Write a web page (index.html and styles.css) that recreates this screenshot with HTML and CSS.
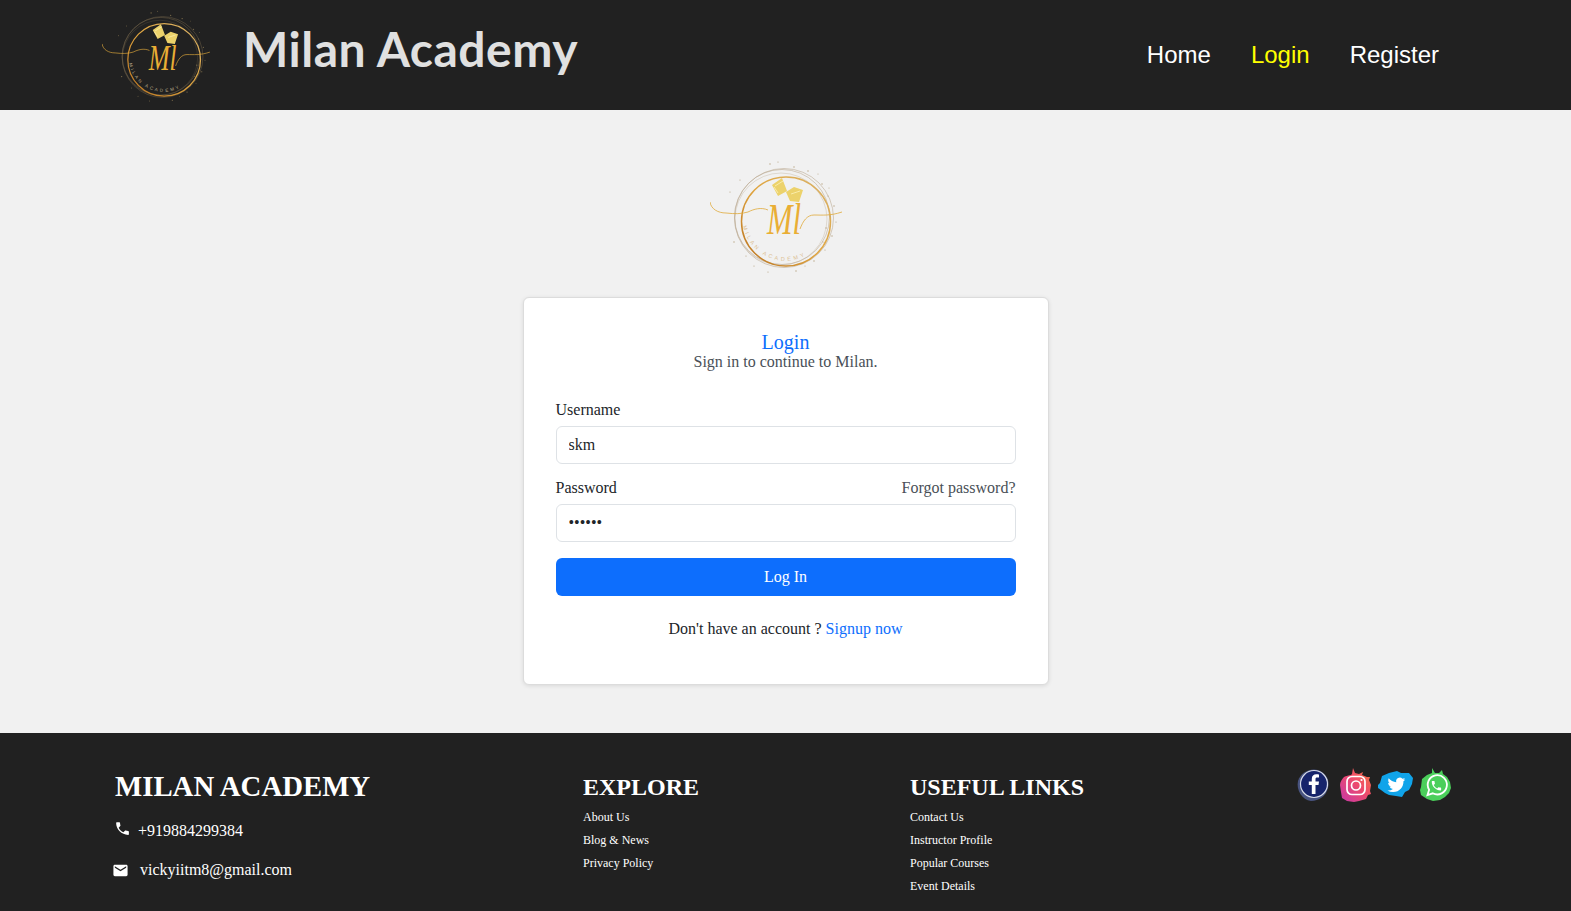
FILE: index.html
```html
<!DOCTYPE html>
<html lang="en">
<head>
<meta charset="utf-8">
<title>Milan Academy - Login</title>
<link rel="stylesheet" href="styles.css">
</head>
<body>
<svg class="defs" width="0" height="0" aria-hidden="true">
  <defs>
    <linearGradient id="gold-ring" x1="0" y1="1" x2="1" y2="0">
      <stop offset="0" stop-color="#b8711f"/>
      <stop offset=".5" stop-color="#e0a53f"/>
      <stop offset="1" stop-color="#d9b36a"/>
    </linearGradient>
    <symbol id="logo" viewBox="0 0 132 120">
      <circle class="ring-thin" cx="72" cy="59" r="47.5"/>
      <circle class="ring-thin" cx="74" cy="60" r="49.5"/>
      <circle class="ring-thin faint" cx="71" cy="61" r="46"/>
      <circle class="ring-gold" cx="76" cy="63.5" r="44.5"/>
      <path class="swash" d="M0 44c1 7 8 11 16 11 9 1 15 1 22-1 6-3 13-5 20-2M90 71c3-8 7-14 14-14 8 0 16 1 28-3"/>
      <path class="book" d="M62 27l10-7 5 13-9 5zM76 34l8-5 9 3-4 12-9-1z"/>
      <path class="book-edge" d="M65 28l8-5M68 35l-4-6M81 36l9-3"/>
      <text class="monogram" transform="translate(57 76) scale(.85 1.25)">Ml</text>
      <path id="logo-arc" class="arc" d="M33 68a43 43 0 0 0 77 17"/>
      <text class="logo-text"><textPath href="#logo-arc">MILAN ACADEMY</textPath></text>
      <g class="dots">
        <circle cx="60" cy="6" r=".7"/><circle cx="68" cy="4" r=".6"/><circle cx="84" cy="9" r=".7"/><circle cx="98" cy="13" r=".7"/>
        <circle cx="112" cy="26" r=".7"/><circle cx="118" cy="38" r=".6"/><circle cx="124" cy="48" r=".7"/><circle cx="126" cy="64" r=".6"/>
        <circle cx="122" cy="78" r=".7"/><circle cx="115" cy="92" r=".6"/><circle cx="104" cy="103" r=".7"/><circle cx="36" cy="98" r=".6"/>
        <circle cx="24" cy="84" r=".7"/><circle cx="44" cy="108" r=".6"/><circle cx="58" cy="114" r=".6"/><circle cx="86" cy="113" r=".7"/>
        <circle cx="30" cy="22" r=".6"/><circle cx="20" cy="34" r=".6"/><circle cx="120" cy="58" r=".7"/><circle cx="116" cy="70" r=".7"/>
        <circle cx="108" cy="16" r=".5"/><circle cx="119" cy="30" r=".5"/><circle cx="113" cy="84" r=".6"/><circle cx="95" cy="108" r=".5"/>
      </g>
    </symbol>
  </defs>
</svg>

<header class="site-header">
  <div class="brand">
    <svg class="brand-logo on-dark"><use href="#logo"/></svg>
    <span class="brand-name">Milan Academy</span>
  </div>
  <nav class="site-nav">
    <a href="#">Home</a>
    <a href="#" class="active">Login</a>
    <a href="#">Register</a>
  </nav>
</header>

<main class="login-page">
  <svg class="page-logo on-light"><use href="#logo"/></svg>
  <section class="card">
    <div class="card-head">
      <h1>Login</h1>
      <p>Sign in to continue to Milan.</p>
    </div>
    <form>
      <label class="field-label" for="username">Username</label>
      <input class="field-input" id="username" type="text" value="skm">
      <div class="label-row">
        <label class="field-label" for="password">Password</label>
        <a href="#" class="forgot">Forgot password?</a>
      </div>
      <input class="field-input" id="password" type="password" value="secret">
      <button type="button" class="submit">Log In</button>
    </form>
    <p class="signup">Don't have an account ? <a href="#">Signup now</a></p>
  </section>
</main>

<footer class="site-footer">
  <div class="foot-col contact">
    <h2>MILAN ACADEMY</h2>
    <p class="contact-phone">
      <svg viewBox="0 0 24 24"><path d="M6.62 10.79c1.44 2.83 3.76 5.14 6.59 6.59l2.2-2.2c.27-.27.67-.36 1.02-.24 1.12.37 2.33.57 3.57.57.55 0 1 .45 1 1V20c0 .55-.45 1-1 1-9.39 0-17-7.61-17-17 0-.55.45-1 1-1h3.5c.55 0 1 .45 1 1 0 1.25.2 2.45.57 3.57.11.35.03.74-.25 1.02l-2.2 2.2z"/></svg>
      <span>+919884299384</span>
    </p>
    <p class="contact-mail">
      <svg viewBox="0 0 24 24"><path d="M20 4H4c-1.1 0-1.99.9-1.99 2L2 18c0 1.1.9 2 2 2h16c1.1 0 2-.9 2-2V6c0-1.1-.9-2-2-2zm0 4l-8 5-8-5V6l8 5 8-5v2z"/></svg>
      <span>vickyiitm8@gmail.com</span>
    </p>
  </div>
  <div class="foot-col">
    <h3>EXPLORE</h3>
    <ul>
      <li><a href="#">About Us</a></li>
      <li><a href="#">Blog &amp; News</a></li>
      <li><a href="#">Privacy Policy</a></li>
    </ul>
  </div>
  <div class="foot-col">
    <h3>USEFUL LINKS</h3>
    <ul>
      <li><a href="#">Contact Us</a></li>
      <li><a href="#">Instructor Profile</a></li>
      <li><a href="#">Popular Courses</a></li>
      <li><a href="#">Event Details</a></li>
    </ul>
  </div>
  <div class="socials">
    <svg viewBox="0 0 36 36" class="social social-fb">
      <path class="fb-smear" d="M3 14c3-9 12-13 20-11 8 3 12 10 10 18-2 8-9 13-17 13C7 33 1 23 3 14z"/>
      <circle class="fb-ring" cx="19" cy="17" r="13.500"/>
      <path class="white" d="M20.500 27v-9h3l.5-3.500h-3.500v-2.200c0-1 .3-1.700 1.800-1.700H24V7.500c-.4 0-1.500-.2-2.700-.2-2.700 0-4.500 1.600-4.500 4.600v2.600h-3V18h3v9z"/>
    </svg>
    <svg viewBox="0 0 36 36" class="social">
      <defs><linearGradient id="ig" x1="0" y1="1" x2="1" y2="0"><stop offset="0" stop-color="#c637a8"/><stop offset=".55" stop-color="#ee4a6c"/><stop offset="1" stop-color="#f4793d"/></linearGradient></defs>
      <path fill="url(#ig)" d="M2 18c0-3 2-6 4-8 2-1 5-2 7-2l1-1 1-6 2 5 4 1 4-2-1 3 5 2 3 0-1 3 2 5-1 6 1 3-3 1-2 4-7 2-5 1-7-1-5-3-1-6z"/>
      <rect class="outline" x="9" y="9.500" width="18" height="18" rx="5"/>
      <circle class="outline" cx="18" cy="18.500" r="4.500"/>
      <circle class="white" cx="23.500" cy="13" r="1.100"/>
    </svg>
    <svg viewBox="0 0 36 36" class="social">
      <path class="tw-blob" d="M0 18l2-2 2-7 7-3 8-2 4 2 8 0 4 5-1 6-3 6-4 2-3 5-6-1-7-1-4-2-4-3-3-2z"/>
      <g transform="translate(9.500 9) scale(.74)"><path class="white" d="M23.953 4.570a10 10 0 01-2.825.775 4.958 4.958 0 002.163-2.723c-.951.555-2.005.959-3.127 1.184a4.920 4.920 0 00-8.384 4.482C7.690 8.095 4.067 6.130 1.640 3.162a4.822 4.822 0 00-.666 2.475c0 1.710.870 3.213 2.188 4.096a4.904 4.904 0 01-2.228-.616v.060a4.923 4.923 0 003.946 4.827 4.996 4.996 0 01-2.212.085 4.936 4.936 0 004.604 3.417 9.867 9.867 0 01-6.102 2.105c-.390 0-.779-.023-1.170-.067a13.995 13.995 0 007.557 2.209c9.053 0 13.998-7.496 13.998-13.985 0-.210 0-.420-.015-.630A9.935 9.935 0 0024 4.590z"/></g>
    </svg>
    <svg viewBox="0 0 36 36" class="social">
      <path class="wa-blob" d="M3 20l1-8 5-4 5-2 0-5 3 5 4 0 3-3 1 4 4 3 3 5 1 6-2 5-4 4-5 3-7 1-6-2-6-4-1-5z"/>
      <path class="wa-ring" d="M9.500 28l1.600-5.200a9.600 9.600 0 1 1 3.700 3.500z"/>
      <g transform="translate(12.200 12.500) scale(.52)"><path class="white" d="M6.620 10.790c1.440 2.830 3.760 5.140 6.590 6.590l2.200-2.200c.27-.27.67-.36 1.020-.24 1.120.37 2.330.57 3.570.57.55 0 1 .45 1 1V20c0 .55-.45 1-1 1-9.390 0-17-7.610-17-17 0-.55.45-1 1-1h3.500c.55 0 1 .45 1 1 0 1.250.2 2.450.57 3.570.11.350.03.740-.25 1.020l-2.200 2.200z"/></g>
    </svg>
  </div>
</footer>
</body>
</html>
```
FILE: styles.css
```css
* { box-sizing: border-box; }
html, body { margin: 0; padding: 0; }
body {
  font-family: "Liberation Serif", "Times New Roman", serif;
  font-size: 16px;
  line-height: 1.5;
  color: #212529;
  background: #f1f1f1;
}
a { text-decoration: none; color: inherit; }
.defs { position: absolute; }

.site-header {
  height: 110px;
  background: #212121;
  display: flex;
  align-items: center;
  justify-content: space-between;
  padding: 0 132px 0 102px;
}
.brand { display: flex; align-items: center; gap: 33px; }
.brand-logo { width: 108px; height: 98px; margin-top: 4px; }
.brand-name {
  font-family: Lato, sans-serif;
  font-weight: 700;
  font-size: 48px;
  letter-spacing: .5px;
  line-height: 1;
  color: #e0e0e0;
  margin-bottom: 13px;
}
.site-nav {
  display: flex;
  gap: 40px;
  font-family: "Liberation Sans", Arial, sans-serif;
  font-size: 24px;
  color: #fff;
}
.site-nav .active { color: #ffff00; }

.on-dark { --ring: #6f6148; --logo-text: #b9a888; --dots: #8d7a52; }
.on-light { --ring: #bcab93; --logo-text: #dcbf93; --dots: #b8a583; }
.ring-thin { fill: none; stroke: var(--ring); stroke-width: .6; }
.ring-gold { fill: none; stroke: url(#gold-ring); stroke-width: 1.500; }
.faint { opacity: .6; }
.swash { fill: none; stroke: #e0a93a; stroke-width: .8; }
.book { fill: #ecd26b; }
.book-edge { fill: none; stroke: #fbeeb0; stroke-width: .9; }
.monogram { font-family: "Liberation Serif", serif; font-style: italic; font-size: 36px; fill: #e9ae35; }
.arc { fill: none; }
.logo-text { font-family: "Liberation Sans", sans-serif; font-size: 5.500px; letter-spacing: 2.800px; fill: var(--logo-text); }
.dots { fill: var(--dots); }

.login-page {
  height: 623px;
  display: flex;
  flex-direction: column;
  align-items: center;
  padding-top: 48px;
}
.page-logo { width: 132px; height: 120px; margin: 0 20px 19px 0; flex: none; }
.card {
  width: 526px;
  height: 388px;
  background: #fff;
  border: 1px solid #dcdcdc;
  border-radius: 6px;
  box-shadow: 0 1px 4px rgba(0, 0, 0, .1);
  padding: 32px;
}
.card-head { text-align: center; margin-bottom: 30px; }
.card-head h1 { margin: 0; font-size: 20px; font-weight: 400; line-height: 24px; color: #0d6efd; }
.card-head p { margin: 0; line-height: 16px; color: #495057; }
.field-label { display: block; line-height: 20px; margin-bottom: 6px; color: #212529; }
.field-input {
  display: block;
  width: 100%;
  height: 38px;
  border: 1px solid #dee2e6;
  border-radius: 6px;
  padding: 0 12px;
  font: inherit;
  color: #212529;
  margin-bottom: 14px;
  background: #fff;
}
.label-row { display: flex; justify-content: space-between; }
.forgot { color: #495057; line-height: 20px; }
.submit {
  display: block;
  width: 100%;
  height: 38px;
  margin-top: 16px;
  border: 0;
  border-radius: 6px;
  background: #0d6efd;
  color: #fff;
  font: inherit;
}
.signup { margin: 21px 0 0; text-align: center; color: #212529; }
.signup a { color: #0d6efd; }

.site-footer {
  height: 178px;
  background: #212121;
  color: #fff;
  display: grid;
  grid-template-columns: 468px 327px 385px auto;
  padding: 33px 0 0 116px;
}
.site-footer h2 { margin: 0 0 13px -1px; font-size: 28.800px; line-height: 40px; font-weight: 700; }
.site-footer h3 { margin: 5px 0 0 -1px; font-size: 24px; line-height: 32px; font-weight: 700; }
.contact p { margin: 0; display: flex; align-items: center; font-size: 16px; }
.contact-phone { gap: 7px; height: 24px; margin-left: -2px !important; }
.contact-phone svg { width: 17px; height: 17px; fill: #fff; margin-top: -5px; }
.contact-mail { gap: 11px; margin-top: 15px !important; margin-left: -4px !important; height: 24px; }
.contact-mail svg { width: 17px; height: 17px; fill: #fff; }
.foot-col ul { list-style: none; margin: 3px 0 0 -1px; padding: 0; font-size: 12px; line-height: 23px; }
.socials { display: flex; gap: 4px; align-items: flex-start; margin: 1px 0 0 -1px; }
.social { width: 36px; height: 36px; flex: none; }
.social-fb { margin-right: 3px; }
.white { fill: #fff; }
.outline { fill: none; stroke: #fff; stroke-width: 1.700; }
.fb-smear { fill: #5a6aa8; opacity: .7; }
.fb-ring { fill: #17246b; stroke: #d8dce8; stroke-width: 1.200; }
.tw-blob { fill: #10a4ea; }
.wa-blob { fill: #4bcf5b; }
.wa-ring { fill: none; stroke: #fff; stroke-width: 1.800; }
```
